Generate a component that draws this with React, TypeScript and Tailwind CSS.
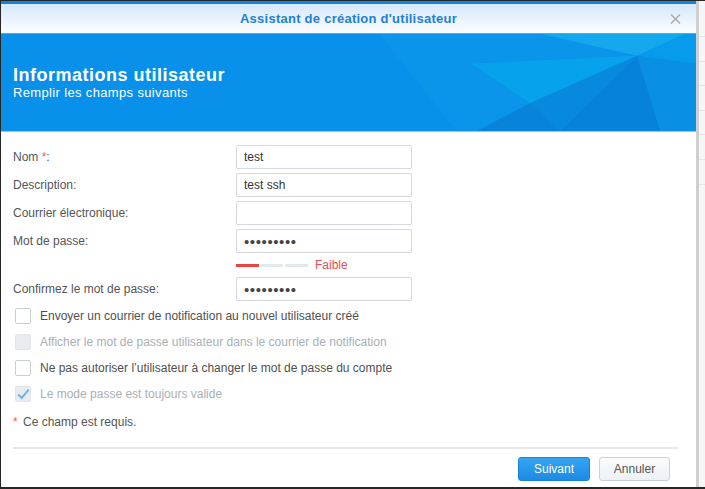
import React from "react";

type Field = { label: string; value: string; required?: boolean; secret?: boolean };

const topFields: Field[] = [
  { label: "Nom", value: "test", required: true },
  { label: "Description", value: "test ssh" },
  { label: "Courrier électronique", value: "" },
  { label: "Mot de passe", value: "•••••••••", secret: true },
];

const options = [
  { label: "Envoyer un courrier de notification au nouvel utilisateur créé", state: "off" },
  { label: "Afficher le mot de passe utilisateur dans le courrier de notification", state: "disabled" },
  { label: "Ne pas autoriser l’utilisateur à changer le mot de passe du compte", state: "off" },
  { label: "Le mode passe est toujours valide", state: "checkedDisabled" },
];

function FieldRow({ field }: { field: Field }) {
  return (
    <div className="flex items-center h-[24px]">
      <div className="w-[223px] text-[12px] text-[#555]">
        {field.label}
        {field.required && <span className="text-[#f05a5a]"> *</span>}:
      </div>
      <div className="w-[176px] h-[24px] border border-[#d3d9df] bg-white rounded-[2px] flex items-center px-[7px]">
        {field.secret ? (
          <span className="text-[15px] tracking-[0.6px] text-[#444] leading-none">{field.value}</span>
        ) : (
          <span className="text-[12px] text-[#333]">{field.value}</span>
        )}
      </div>
    </div>
  );
}

function Checkbox({ state }: { state: string }) {
  if (state === "off") {
    return <div className="w-[16px] h-[16px] border border-[#c8cfd6] bg-white rounded-[2px]" />;
  }
  return (
    <div className="w-[16px] h-[16px] border border-[#e2e6ea] bg-[#e8ecf0] rounded-[2px] flex items-center justify-center">
      {state === "checkedDisabled" && (
        <svg width="16" height="16" viewBox="0 0 16 16" className="-mt-[1px]">
          <path d="M2.5 8.5 L6.5 12.5 L14.5 3" fill="none" stroke="#72b4ea" strokeWidth="2.4" />
        </svg>
      )}
    </div>
  );
}

function Banner() {
  return (
    <div className="relative h-[98px] bg-[#0890ea] border-t border-[#43aff0] overflow-hidden">
      <svg className="absolute inset-0 w-full h-full" viewBox="0 0 695 98" preserveAspectRatio="none">
        <polygon points="378,0 540,0 636,22 529,70 476,98 455,98" fill="#0a94ea" />
        <polygon points="470,30 636,22 529,70" fill="#07a2ec" />
        <polygon points="540,0 684,0 636,22" fill="#15a8ef" />
        <polygon points="684,0 695,0 695,30 636,22" fill="#079ceb" />
        <polygon points="636,22 695,30 695,98 659,98" fill="#098fe3" />
        <polygon points="636,22 659,98 559,98" fill="#0682d9" />
        <polygon points="636,22 559,98 529,70" fill="#078ade" />
        <polygon points="529,70 559,98 476,98" fill="#0784da" />
      </svg>
      <div className="relative pl-[12px] pt-[32px] text-white">
        <div className="text-[18px] leading-[19px] font-bold tracking-[0.5px]">Informations utilisateur</div>
        <div className="text-[13px] leading-[16px] tracking-[0.35px]">Remplir les champs suivants</div>
      </div>
    </div>
  );
}

export default function App() {
  return (
    <div className="w-[705px] h-[489px] overflow-hidden bg-[#262626] pt-[1px] pl-[1px] pb-[2px] flex font-['Liberation_Sans',Arial,sans-serif]">
      <div className="w-[695px] flex flex-col bg-white">
        <div className="h-[3px] bg-[#0c86de]" />
        <div className="relative h-[29px] bg-gradient-to-b from-[#d5e8fb] to-[#fcfdff] flex items-center justify-center">
          <span className="text-[13px] font-bold tracking-[0.25px] text-[#1f80d2]">
            Assistant de création d'utilisateur
          </span>
          <svg className="absolute right-[15px] top-[10px]" width="11" height="10" viewBox="0 0 11 10">
            <path d="M1 0.5 L10 9.5 M10 0.5 L1 9.5" stroke="#a8a8a8" strokeWidth="1.4" />
          </svg>
        </div>
        <Banner />
        <div className="h-[1px] bg-[#8fcdf5]" />

        <div className="flex-1 flex flex-col pl-[12px] pr-[18px] pt-[13px]">
          <div className="flex flex-col gap-[4px]">
            {topFields.map((f) => (
              <FieldRow key={f.label} field={f} />
            ))}
            <div className="flex items-center h-[16px] pl-[223px]">
              <div className="w-[23px] h-[3px] bg-[#e84545]" />
              <div className="w-[22px] h-[3px] bg-[#e3e8ed] ml-[2px]" />
              <div className="w-[23px] h-[3px] bg-[#e3e8ed] ml-[2px]" />
              <span className="ml-[7px] text-[12px] text-[#ec4c4c]">Faible</span>
            </div>
            <FieldRow field={{ label: "Confirmez le mot de passe", value: "•••••••••", secret: true }} />
          </div>

          <div className="flex flex-col mt-[2px]">
            {options.map((o) => (
              <div key={o.label} className="flex items-center h-[26px] pl-[2px]">
                <Checkbox state={o.state} />
                <span
                  className={`ml-[9px] text-[12px] ${
                    o.state === "off" ? "text-[#4f4f4f]" : "text-[#a9afb6]"
                  }`}
                >
                  {o.label}
                </span>
              </div>
            ))}
          </div>

          <div className="mt-[5px] h-[20px] flex items-center text-[12px] text-[#555]">
            <span className="text-[#f05a5a] w-[10px]">*</span>
            Ce champ est requis.
          </div>

          <div className="mt-[15px] h-[2px] bg-[#e8e8e8]" />

          <div className="mt-[8px] flex justify-end gap-[9px] pr-[8px]">
            <button className="w-[72px] h-[24px] rounded-[3px] border border-[#1683d8] bg-gradient-to-b from-[#36a3f2] to-[#1b8be2] text-white text-[12px]">
              Suivant
            </button>
            <button className="w-[71px] h-[24px] rounded-[3px] border border-[#c9d2db] bg-gradient-to-b from-[#fafcfd] to-[#edf1f5] text-[#555] text-[12px]">
              Annuler
            </button>
          </div>
        </div>
      </div>

      <div className="flex-1 flex flex-col bg-[#f6f6f6] border-l-[3px] border-[#cfcfcf]">
        <div className="h-[36px] border-b border-[#e4e4e4]" />
        <div className="h-[25px] border-b border-[#e4e4e4]" />
        <div className="h-[24px] border-b border-[#e4e4e4]" />
        <div className="h-[25px] border-b border-[#e4e4e4]" />
        <div className="h-[24px] border-b border-[#e4e4e4]" />
        <div className="h-[25px] border-b border-[#e4e4e4]" />
        <div className="h-[25px] border-b border-[#e4e4e4]" />
      </div>
    </div>
  );
}
